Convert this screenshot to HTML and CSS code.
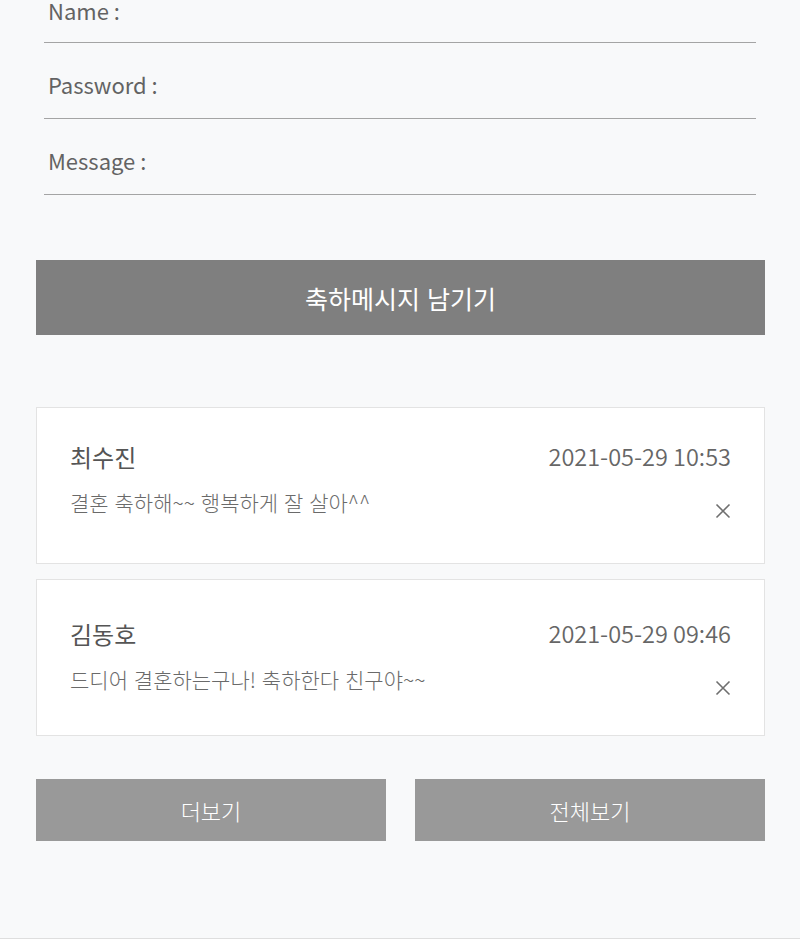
FILE: index.html
```html
<!DOCTYPE html>
<html lang="ko">
<head>
<meta charset="utf-8">
<title>방명록</title>
<link rel="stylesheet" href="styles.css">
</head>
<body>
<section class="guestbook">
  <form class="form">
    <div class="field"><span class="label" lang="en">Name :</span></div>
    <div class="field"><span class="label" lang="en">Password :</span></div>
    <div class="field"><span class="label" lang="en">Message :</span></div>
  </form>
  <button class="submit" type="button">축하메시지 남기기</button>
  <ul class="list">
    <li class="card">
      <div class="card-head">
        <span class="name">최수진</span>
        <span class="date" lang="en">2021-05-29 10:53</span>
      </div>
      <div class="card-body">
        <p class="msg">결혼 축하해~~ 행복하게 잘 살아^^</p>
        <svg class="close" width="16" height="16" viewBox="0 0 16 16"><path d="M1.5 1.5 L14.5 14.5 M14.5 1.5 L1.5 14.5" stroke="#6f6f6f" stroke-width="1.6" fill="none"/></svg>
      </div>
    </li>
    <li class="card card-late">
      <div class="card-head">
        <span class="name">김동호</span>
        <span class="date" lang="en">2021-05-29 09:46</span>
      </div>
      <div class="card-body">
        <p class="msg">드디어 결혼하는구나! 축하한다 친구야~~</p>
        <svg class="close" width="16" height="16" viewBox="0 0 16 16"><path d="M1.5 1.5 L14.5 14.5 M14.5 1.5 L1.5 14.5" stroke="#6f6f6f" stroke-width="1.6" fill="none"/></svg>
      </div>
    </li>
  </ul>
  <div class="actions">
    <button class="more" type="button">더보기</button>
    <button class="more" type="button">전체보기</button>
  </div>
</section>
</body>
</html>
```
FILE: styles.css
```css
html, body {
  margin: 0;
  padding: 0;
  background: #f8f9fa;
}
body {
  font-family: "Noto Sans CJK KR", "Noto Sans", sans-serif;
  color: #666;
}
.guestbook {
  padding: 0 35px 97px 36px;
  border-bottom: 1px solid #dedede;
}
.form {
  display: flex;
  flex-direction: column;
  padding: 0 9px 0 8px;
}
.field {
  padding: 31px 4px 24px;
  border-bottom: 1px solid #a4a4a4;
}
.field:first-child {
  padding-top: 0;
  padding-bottom: 22px;
}
.label {
  display: block;
  font-size: 22px;
  line-height: 20px;
  color: #636363;
}
.submit {
  display: block;
  width: 100%;
  height: 75px;
  margin-top: 65px;
  border: 0;
  background: #7f7f7f;
  color: #fff;
  font-family: inherit;
  font-size: 25px;
  padding: 0;
}
.list {
  list-style: none;
  margin: 72px 0 0;
  padding: 0;
  display: flex;
  flex-direction: column;
  gap: 15px;
}
.card {
  background: #fff;
  border: 1px solid #e3e3e3;
  box-sizing: border-box;
  height: 157px;
  padding: 31px 33px 0;
}
.card-late {
  padding-top: 36px;
}
.card-head {
  display: flex;
  justify-content: space-between;
  align-items: center;
  height: 34px;
}
.name {
  font-size: 24px;
  color: #555;
}
.date {
  font-size: 23.5px;
  font-weight: 350;
  color: #666;
}
.card-body {
  display: flex;
  justify-content: space-between;
  align-items: flex-end;
  margin-top: 14px;
}
.msg {
  margin: 0;
  font-size: 21px;
  line-height: 30px;
  font-weight: 300;
  color: #6a6a6a;
}
.close {
  display: block;
  margin: 0 0 -2px;
}
.actions {
  display: flex;
  gap: 29px;
  margin-top: 43px;
}
.more {
  flex: 1;
  height: 62px;
  border: 0;
  background: #999;
  color: #fff;
  font-family: inherit;
  font-size: 22px;
  font-weight: 300;
  padding: 0;
}
```
